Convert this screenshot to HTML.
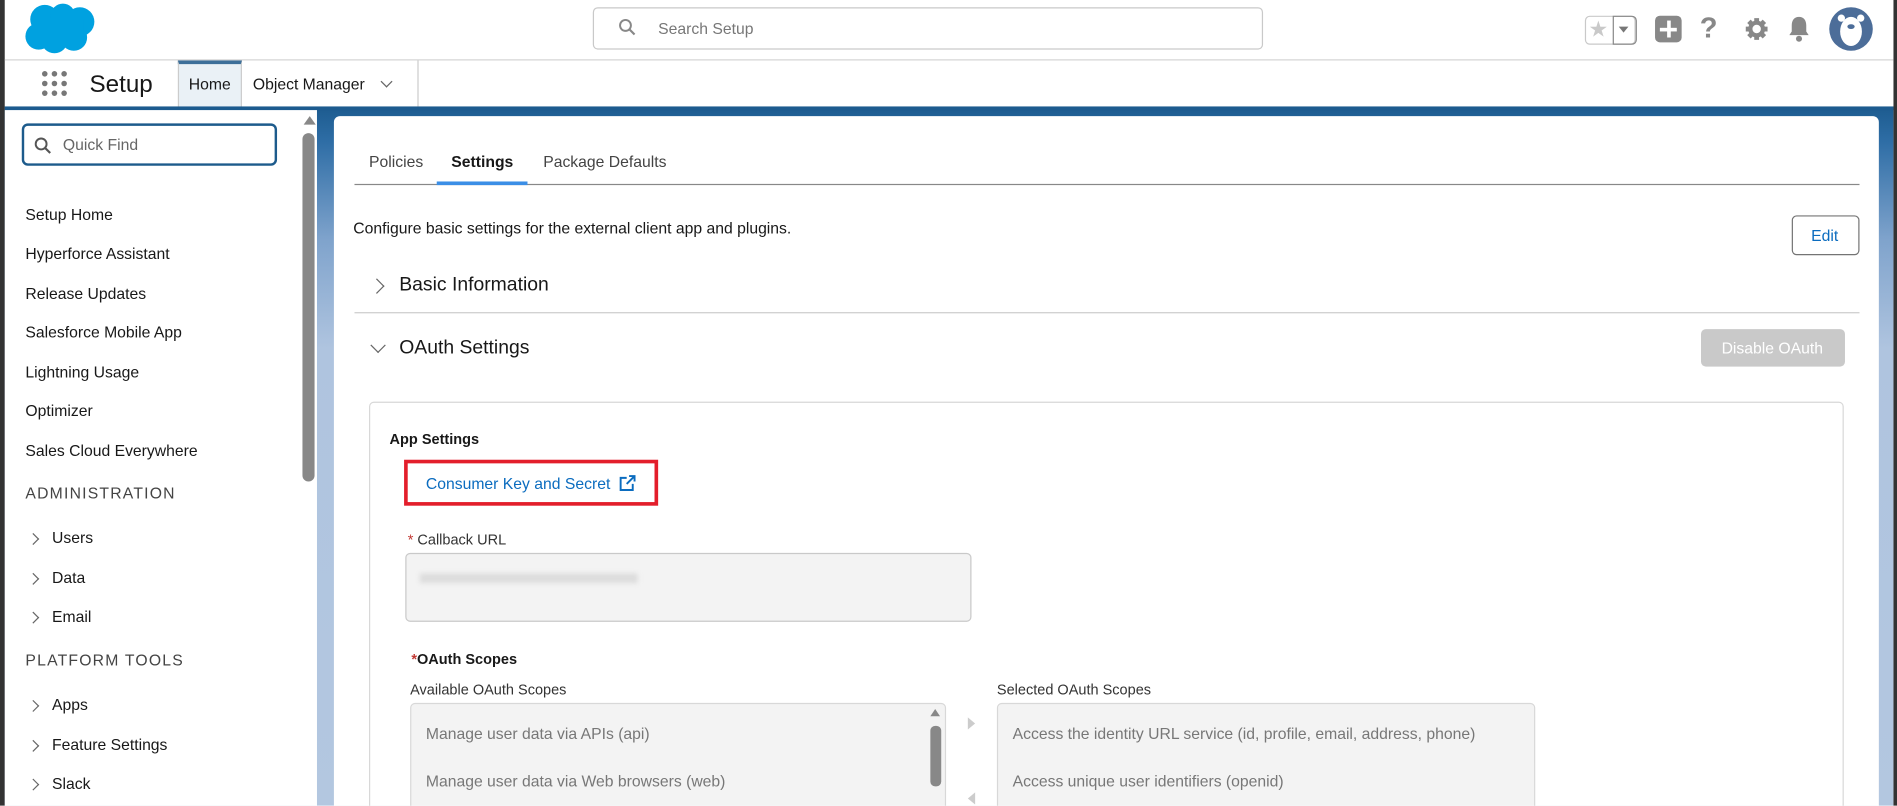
<!DOCTYPE html>
<html><head><meta charset="utf-8"><style>
html,body{margin:0;padding:0;width:1897px;height:806px;overflow:hidden;background:#fff}
#w{position:absolute;left:0;top:0;width:1568px;height:666px;transform:scale(1.20982);transform-origin:0 0;font-family:"Liberation Sans",sans-serif;color:#181818;overflow:hidden}
.a{position:absolute}
.t{position:absolute;white-space:nowrap;font-size:13px;line-height:16px}
.side .t{color:#181818}
.chev{position:absolute;width:6px;height:6px;border-right:1.5px solid #666;border-top:1.5px solid #666;transform:rotate(45deg)}
</style></head><body><div id="w">
<!-- frame borders -->
<div class="a" style="left:0;top:0;width:4px;height:666px;background:#333"></div>
<div class="a" style="left:1565px;top:0;width:3px;height:666px;background:#333"></div>
<!-- header -->
<div class="a" style="left:4px;top:0;width:1561px;height:49px;background:#fff;border-bottom:1px solid #d4d4d4"></div>
<svg class="a" style="left:19px;top:2px" width="62" height="43" viewBox="0 0 62 43"><g fill="#00a1e0"><circle cx="18" cy="14" r="12"/><circle cx="33" cy="11" r="10"/><circle cx="47" cy="16" r="12"/><circle cx="13" cy="28" r="11"/><circle cx="26" cy="31" r="11"/><circle cx="42" cy="29" r="11"/><rect x="12" y="14" width="38" height="20"/></g></svg>
<div class="a" style="left:490px;top:6px;width:552px;height:33px;border:1px solid #c9c9c9;border-radius:4px;background:#fff"></div>
<svg class="a" style="left:511px;top:15px" width="15" height="15" viewBox="0 0 15 15"><circle cx="6" cy="6" r="4.5" fill="none" stroke="#888" stroke-width="1.6"/><line x1="9.3" y1="9.3" x2="13.5" y2="13.5" stroke="#888" stroke-width="1.8"/></svg>
<div class="t" style="left:544px;top:16px;color:#777;font-size:13px">Search Setup</div>
<!-- right icons -->
<div class="a" style="left:1310px;top:13px;width:40px;height:22px;border:1px solid #c9c9c9;border-radius:4px"></div>
<div class="a" style="left:1333px;top:13px;width:18px;height:22px;border:1px solid #888;border-radius:0 4px 4px 0"></div>
<div class="t" style="left:1313px;top:13px;font-size:18px;line-height:22px;color:#c9c9c9">★</div>
<div class="a" style="left:1338px;top:22px;border-left:4px solid transparent;border-right:4px solid transparent;border-top:5px solid #777"></div>
<div class="a" style="left:1368px;top:13px;width:22px;height:22px;background:#888;border-radius:4px"></div>
<div class="a" style="left:1372px;top:22.5px;width:14px;height:3px;background:#fff"></div>
<div class="a" style="left:1377.5px;top:17px;width:3px;height:14px;background:#fff"></div>
<div class="t" style="left:1405px;top:11px;font-size:24px;line-height:26px;color:#888;font-weight:bold">?</div>
<svg class="a" style="left:1441px;top:13px" width="22" height="22" viewBox="0 0 22 22"><g fill="#888"><circle cx="11" cy="11" r="7"/><g stroke="#888" stroke-width="4"><line x1="11" y1="2" x2="11" y2="20"/><line x1="2" y1="11" x2="20" y2="11"/><line x1="4.6" y1="4.6" x2="17.4" y2="17.4"/><line x1="17.4" y1="4.6" x2="4.6" y2="17.4"/></g></g><circle cx="11" cy="11" r="3.5" fill="#fff"/></svg>
<svg class="a" style="left:1477px;top:12px" width="20" height="24" viewBox="0 0 20 24"><path d="M10 2c-4 0-6 3-6 7v5l-2 3h16l-2-3V9c0-4-2-7-6-7z" fill="#888"/><circle cx="10" cy="20" r="2.5" fill="#888"/></svg>
<svg class="a" style="left:1511px;top:5px" width="38" height="38" viewBox="0 0 38 38"><circle cx="19" cy="19" r="18" fill="#4c6d99"/><circle cx="11" cy="10" r="3" fill="#fff"/><circle cx="27" cy="10" r="3" fill="#fff"/><ellipse cx="19" cy="21" rx="9" ry="12" fill="#fff"/><ellipse cx="19" cy="17" rx="3" ry="2" fill="#4c6d99"/></svg>
<!-- nav -->
<div class="a" style="left:4px;top:50px;width:1561px;height:38px;background:#fff"></div>
<svg class="a" style="left:34px;top:58px" width="22" height="22" viewBox="0 0 22 22"><g fill="#777"><circle cx="3" cy="3" r="2.3"/><circle cx="11" cy="3" r="2.3"/><circle cx="19" cy="3" r="2.3"/><circle cx="3" cy="11" r="2.3"/><circle cx="11" cy="11" r="2.3"/><circle cx="19" cy="11" r="2.3"/><circle cx="3" cy="19" r="2.3"/><circle cx="11" cy="19" r="2.3"/><circle cx="19" cy="19" r="2.3"/></g></svg>
<div class="t" style="left:74px;top:59px;font-size:20px;line-height:22px">Setup</div>
<div class="a" style="left:147px;top:50px;width:53px;height:38px;background:#eaf1f6;border-top:3px solid #3d6f99;box-sizing:border-box;border-right:1px solid #ccc;border-left:1px solid #ccc"></div>
<div class="t" style="left:156px;top:62px">Home</div>
<div class="t" style="left:209px;top:62px">Object Manager</div>
<div class="chev" style="left:316px;top:64px;transform:rotate(135deg)"></div>
<div class="a" style="left:345px;top:50px;width:1px;height:38px;background:#ccc"></div>
<!-- background -->
<div class="a" style="left:4px;top:88px;width:1561px;height:578px;background:linear-gradient(180deg,#1c5b8f 0,#2f6ea6 30px,#7fa3cc 110px,#afc4df 200px,#b3c7e0 100%)"></div>
<div class="a" style="left:4px;top:88px;width:1561px;height:3px;background:#1c5b8f"></div>
<!-- sidebar -->
<div class="a side" style="left:4px;top:91px;width:258px;height:575px;background:#fff">
</div>
<div class="a" style="left:18px;top:102px;width:211px;height:35px;border:2px solid #1d5b8c;border-radius:5px;box-sizing:border-box"></div>
<svg class="a" style="left:28px;top:113px" width="15" height="15" viewBox="0 0 15 15"><circle cx="6" cy="6" r="4.5" fill="none" stroke="#555" stroke-width="1.6"/><line x1="9.3" y1="9.3" x2="13.5" y2="13.5" stroke="#555" stroke-width="1.8"/></svg>
<div class="t" style="left:52px;top:112px;color:#666">Quick Find</div>
<div class="a" style="left:251px;top:96px;border-left:5px solid transparent;border-right:5px solid transparent;border-bottom:7px solid #888"></div>
<div class="a" style="left:250px;top:110px;width:10px;height:288px;background:#888;border-radius:5px"></div>
<div class="t" style="left:21px;top:170px">Setup Home</div>
<div class="t" style="left:21px;top:202px">Hyperforce Assistant</div>
<div class="t" style="left:21px;top:235px">Release Updates</div>
<div class="t" style="left:21px;top:267px">Salesforce Mobile App</div>
<div class="t" style="left:21px;top:300px">Lightning Usage</div>
<div class="t" style="left:21px;top:332px">Optimizer</div>
<div class="t" style="left:21px;top:365px">Sales Cloud Everywhere</div>
<div class="t" style="left:21px;top:400px;color:#444;letter-spacing:1px">ADMINISTRATION</div>
<div class="chev" style="left:24px;top:442px"></div><div class="t" style="left:43px;top:437px">Users</div>
<div class="chev" style="left:24px;top:475px"></div><div class="t" style="left:43px;top:470px">Data</div>
<div class="chev" style="left:24px;top:507px"></div><div class="t" style="left:43px;top:502px">Email</div>
<div class="t" style="left:21px;top:538px;color:#444;letter-spacing:1px">PLATFORM TOOLS</div>
<div class="chev" style="left:24px;top:580px"></div><div class="t" style="left:43px;top:575px">Apps</div>
<div class="chev" style="left:24px;top:613px"></div><div class="t" style="left:43px;top:608px">Feature Settings</div>
<div class="chev" style="left:24px;top:645px"></div><div class="t" style="left:43px;top:640px">Slack</div>
<!-- card -->
<div class="a" style="left:276px;top:96px;width:1277px;height:580px;background:#fff;border-radius:5px"></div>
<div class="t" style="left:305px;top:126px;color:#444">Policies</div>
<div class="t" style="left:373px;top:126px;font-weight:bold">Settings</div>
<div class="t" style="left:449px;top:126px;color:#444">Package Defaults</div>
<div class="a" style="left:293px;top:152px;width:1244px;height:1px;background:#888"></div>
<div class="a" style="left:361px;top:150px;width:75px;height:3px;background:#3b8ee6"></div>
<div class="t" style="left:292px;top:181px">Configure basic settings for the external client app and plugins.</div>
<div class="a" style="left:1481px;top:178px;width:56px;height:33px;border:1px solid #747474;border-radius:4px;box-sizing:border-box"></div>
<div class="t" style="left:1497px;top:187px;color:#0b6cbf">Edit</div>
<div class="chev" style="left:307px;top:232px;width:8px;height:8px"></div>
<div class="t" style="left:330px;top:226px;font-size:16px;line-height:20px">Basic Information</div>
<div class="a" style="left:293px;top:258px;width:1244px;height:1px;background:#ccc"></div>
<div class="chev" style="left:308px;top:281px;width:8px;height:8px;transform:rotate(135deg)"></div>
<div class="t" style="left:330px;top:278px;font-size:16px;line-height:20px">OAuth Settings</div>
<div class="a" style="left:1406px;top:272px;width:119px;height:31px;background:#c9c9c9;border-radius:4px"></div>
<div class="t" style="left:1423px;top:280px;color:#fff">Disable OAuth</div>
<!-- inner box -->
<div class="a" style="left:305px;top:332px;width:1219px;height:340px;border:1px solid #d8d8d8;border-radius:4px;box-sizing:border-box"></div>
<div class="t" style="left:322px;top:355px;font-weight:bold;font-size:12px">App Settings</div>
<div class="a" style="left:334px;top:380px;width:210px;height:38px;border:3px solid #e31e2b;box-sizing:border-box"></div>
<div class="t" style="left:352px;top:392px;color:#0b6cbf">Consumer Key and Secret</div>
<svg class="a" style="left:511px;top:392px" width="15" height="15" viewBox="0 0 15 15"><path d="M7 3H2v10h10V8" fill="none" stroke="#0b6cbf" stroke-width="1.6"/><path d="M7 8l6-6M9 1.5h4.5V6" fill="none" stroke="#0b6cbf" stroke-width="1.6"/></svg>
<div class="t" style="left:337px;top:438px;font-size:12px;color:#333"><span style="color:#c23934">*</span> Callback URL</div>
<div class="a" style="left:335px;top:457px;width:468px;height:57px;background:#f3f3f3;border:1px solid #c9c9c9;border-radius:4px;box-sizing:border-box"></div>
<div class="a" style="left:347px;top:474px;width:180px;height:8px;background:#dcdcdc;filter:blur(2px)"></div>
<div class="t" style="left:340px;top:537px;font-weight:bold;font-size:12px"><span style="color:#c23934">*</span>OAuth Scopes</div>
<div class="t" style="left:339px;top:562px;font-size:12px;color:#333">Available OAuth Scopes</div>
<div class="a" style="left:339px;top:581px;width:443px;height:100px;background:#f3f3f3;border:1px solid #d8d8d8;border-radius:4px;box-sizing:border-box"></div>
<div class="a" style="left:769px;top:586px;border-left:4px solid transparent;border-right:4px solid transparent;border-bottom:6px solid #888"></div>
<div class="a" style="left:769px;top:600px;width:9px;height:50px;background:#888;border-radius:4px"></div>
<div class="t" style="left:352px;top:599px;color:#777">Manage user data via APIs (api)</div>
<div class="t" style="left:352px;top:638px;color:#777">Manage user data via Web browsers (web)</div>
<div class="a" style="left:800px;top:593px;border-top:5px solid transparent;border-bottom:5px solid transparent;border-left:6px solid #ccc"></div>
<div class="a" style="left:800px;top:655px;border-top:5px solid transparent;border-bottom:5px solid transparent;border-right:6px solid #ccc"></div>
<div class="t" style="left:824px;top:562px;font-size:12px;color:#333">Selected OAuth Scopes</div>
<div class="a" style="left:824px;top:581px;width:445px;height:100px;background:#f3f3f3;border:1px solid #d8d8d8;border-radius:4px;box-sizing:border-box"></div>
<div class="t" style="left:837px;top:599px;color:#777">Access the identity URL service (id, profile, email, address, phone)</div>
<div class="t" style="left:837px;top:638px;color:#777">Access unique user identifiers (openid)</div>
</div></body></html>
